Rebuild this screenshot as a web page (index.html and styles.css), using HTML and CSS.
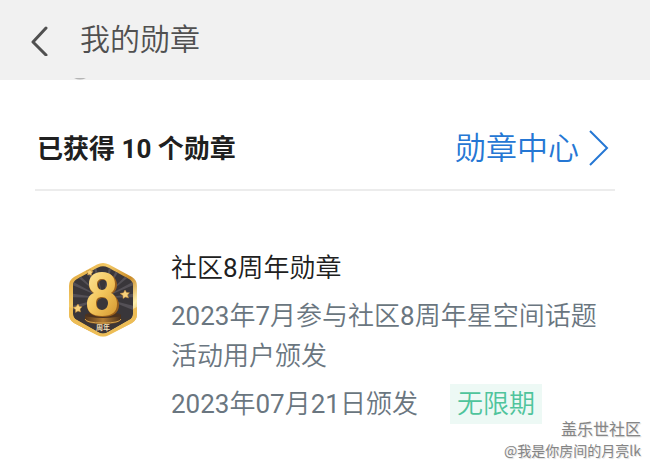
FILE: index.html
```html
<!DOCTYPE html>
<html lang="zh-CN">
<head>
<meta charset="utf-8">
<meta name="viewport" content="width=device-width, initial-scale=1">
<title>我的勋章</title>
<link rel="stylesheet" href="styles.css">
</head>
<body>
<header class="topbar">
  <button class="back" type="button" aria-label="返回">
    <svg width="22" height="32" viewBox="0 0 22 32" fill="none" stroke="#505050" stroke-width="3" stroke-linecap="round" stroke-linejoin="round"><path d="M18 4 5 18 18 31"/></svg>
  </button>
  <h1 class="topbar-title">我的勋章</h1>
  <svg class="peek" width="14" height="3" viewBox="0 0 14 3"><path d="M1 1h12Q7 4 1 1Z" fill="#b5b5b5"/></svg>
</header>
<main class="content">
  <div class="summary">
    <h2 class="summary-title">已获得 10 个勋章</h2>
    <a class="center-link" href="#">勋章中心
      <svg width="24" height="38" viewBox="0 0 24 38" fill="none" stroke="#2577d4" stroke-width="2"><path d="M3 1 20 18 3 35"/></svg>
    </a>
  </div>
  <article class="medal">
    <svg class="medal-icon" width="70" height="76" viewBox="0 0 70 76" role="img" aria-label="8周年">
      <defs>
        <linearGradient id="rim" x1="0" y1="0" x2="1" y2="1">
          <stop offset="0" stop-color="#d99a2e"/><stop offset=".3" stop-color="#f4cb68"/><stop offset=".55" stop-color="#c98b28"/><stop offset=".75" stop-color="#fff0ae"/><stop offset="1" stop-color="#c38320"/>
        </linearGradient>
        <linearGradient id="gold" x1="0" y1="0" x2="1" y2="1">
          <stop offset="0" stop-color="#ffe69a"/><stop offset=".5" stop-color="#f3c65c"/><stop offset="1" stop-color="#d59831"/>
        </linearGradient>
        <linearGradient id="stand" x1="0" x2="1">
          <stop offset="0" stop-color="#53351b"/><stop offset=".5" stop-color="#b07b34"/><stop offset="1" stop-color="#49301c"/>
        </linearGradient>
        <clipPath id="face"><path d="M30 5.500Q35 3 40 5.500L61 17Q65 19 65 24V52Q65 56 61 58L40 70Q35 73 30 70L9 58Q5 56 5 52V24Q5 19 9 17Z"/></clipPath>
      </defs>
      <path d="M29 2.500Q35-.5 41 2.500L64 15Q69 18 69 24V52Q69 58 64 61L41 73Q35 76 29 73L6 61Q1 58 1 52V24Q1 18 6 15Z" fill="url(#rim)"/>
      <g clip-path="url(#face)">
        <path d="M0 0H70V76H0Z" fill="#39363a"/>
        <path d="M35 36 0 2v5zM35 36 0 17v4zM35 36 0 31v4zM35 36 0 45v5zM35 36 12 0h4zM35 36 24 0h3zM35 36 42 0h3zM35 36 52 0h4zM35 36 70 2v5zM35 36 70 17v4zM35 36 70 31v4zM35 36 70 45v5z" fill="#545056"/>
        <path d="M0 56H70V76H0Z" fill="#3c3636"/>
      </g>
      <path d="M1 45 5 47V52Q5 56 9 58L30 70Q35 73 40 70L61 58Q65 56 65 52V47L69 45V52Q69 58 64 61L41 73Q35 76 29 73L6 61Q1 58 1 52Z" fill="#edbd56"/>
      <path d="M17 53V58Q18 62 35 62T53 58V53Z" fill="url(#stand)"/>
      <ellipse cx="35" cy="53" rx="18" ry="3" fill="#4b321f"/>
      <path d="M17 57Q18 61 35 61T53 57" fill="none" stroke="#d8a34a"/>
      <g fill="#f8d27c" stroke="#c58b35" stroke-width=".5">
        <path d="m57 28 1.500 2.500 3 .2-2 2.300 1 3-3-1-2.500 1.500V33.500L52 31.500l3.500-.7z"/>
        <path d="m10 42 1.500 2.500 2.500.2-2 2.300.5 3-2.500-1-2.500 1.500V47.500L5 45.500l3-.7z"/>
        <path d="m22 7 1 2 2 .5-1.500 2v2l-2-1-2 .5.500-2-1.500-2 2.500-.3z"/>
      </g>
      <g fill-rule="evenodd" transform="translate(2 3)">
        <path d="M33 8C24 8 19 13 19 20C19 24 21 27 24 29C20 31 17 35 17 40C17 48 23 52 33 52S49 48 49 40C49 35 46 31 42 29C45 27 47 24 47 20C47 13 42 8 33 8ZM33 15C36 15 38 17 38 20S36 25 33 25S28 23 28 20S30 15 33 15ZM33 33C37 33 39 36 39 39S37 45 33 45S27 43 27 39S29 33 33 33Z" fill="#9a601c"/>
        <path d="M32 7C23 7 19 12 19 19C19 23 21 26 24 28C19 30 17 34 17 39C17 47 22 51 32 51S47 47 47 39C47 34 45 30 41 28C44 26 45 23 45 19C45 12 41 7 32 7ZM32 14C35 14 37 16 37 19S35 25 32 25S27 22 27 19S29 14 32 14ZM32 32C36 32 38 35 38 38S36 45 32 45S26 42 26 38S28 32 32 32Z" fill="url(#gold)"/>
      </g>
      <text class="medal-label" x="35" y="68" text-anchor="middle">周年</text>
    </svg>
    <div class="medal-info">
      <h3 class="medal-name">社区8周年勋章</h3>
      <p class="medal-desc">2023年7月参与社区8周年星空间话题活动用户颁发</p>
      <p class="medal-date">2023年07月21日颁发 <span class="tag">无限期</span></p>
    </div>
  </article>
</main>
<div class="watermark">
  <div class="watermark-site">盖乐世社区</div>
  <div>@我是你房间的月亮lk</div>
</div>
</body>
</html>
```
FILE: styles.css
```css
* { box-sizing: border-box; }
body {
  margin: 0;
  background: #fff;
  color: #202020;
  font-family: Roboto, "Noto Sans CJK SC", sans-serif;
  font-size: 26px;
  line-height: 40px;
}
h1, h2, h3, p { margin: 0; font-size: inherit; font-weight: 400; }
.topbar {
  position: relative;
  display: flex;
  align-items: center;
  gap: 30px;
  padding: 20px 28px;
  background: #f1f1f1;
}
.back {
  display: flex;
  padding: 4px 0;
  border: 0;
  background: none;
}
.topbar-title { color: #505050; font-size: 30px; font-weight: 350; }
.peek { position: absolute; left: 73px; bottom: 0; }
.content { padding: 0 35px; }
.summary {
  display: flex;
  align-items: center;
  justify-content: space-between;
  padding: 49px 4px 20px 2px;
  border-bottom: 2px solid #ececec;
}
.summary-title { font-weight: 700; }
.center-link {
  display: flex;
  align-items: center;
  gap: 8px;
  color: #2577d4;
  font-size: 31px;
  font-weight: 350;
  text-decoration: none;
}
.medal {
  display: flex;
  gap: 33px;
  padding: 57px 16px 40px 33px;
}
.medal-icon { flex: none; margin-top: 14px; }
.medal-label { fill: #f3dfb6; font-size: 7px; font-weight: 700; }
.medal-info {
  display: flex;
  flex-direction: column;
  gap: 8px;
  color: #6a7680;
  font-family: Roboto, "Noto Sans CJK SC DemiLight", "Noto Sans CJK SC", sans-serif;
}
.medal-name { color: #202020; }
.medal-date { display: flex; flex-wrap: wrap; gap: 32px; }
.tag { padding: 0 7px; background: #edf9f5; color: #4fc49c; font-weight: 350; }
.watermark {
  position: absolute;
  right: 9px;
  bottom: 9px;
  color: #858585;
  font-family: "Noto Sans CJK SC", sans-serif;
  font-size: 14px;
  line-height: 22px;
  text-align: right;
  text-shadow: 1px 1px 1px #ddd;
}
.watermark-site { font-size: 16px; }
```
